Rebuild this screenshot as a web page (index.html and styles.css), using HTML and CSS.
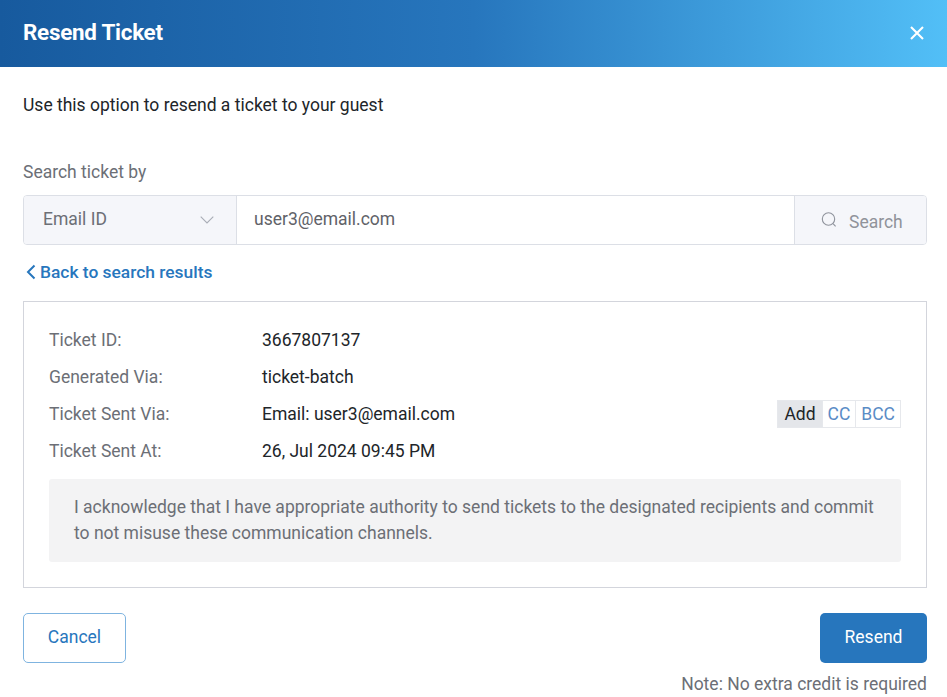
FILE: index.html
```html
<!DOCTYPE html>
<html lang="en">
<head>
<meta charset="utf-8">
<title>Resend Ticket</title>
<link rel="stylesheet" href="styles.css">
</head>
<body>
<div class="modal">
  <header class="head">
    <h1 class="title">Resend Ticket</h1>
    <svg class="close" viewBox="0 0 14 14" width="14" height="14"><path d="M1 1l12 12M13 1L1 13" stroke="#fff" stroke-width="2.1" fill="none"/></svg>
  </header>
  <main class="body">
    <p class="intro">Use this option to resend a ticket to your guest</p>
    <div class="label">Search ticket by</div>
    <div class="search">
      <div class="select">
        <span>Email ID</span>
        <svg viewBox="0 0 14 8" width="14" height="8"><path d="M.7.7L7 7l6.3-6.3" stroke="#a9adb6" stroke-width="1.1" fill="none"/></svg>
      </div>
      <div class="input">user3@email.com</div>
      <div class="go">
        <svg viewBox="0 0 16 16" width="16" height="16"><circle cx="7.5" cy="7" r="6.2" stroke="#8f939c" stroke-width="1.1" fill="none"/><path d="M12 11.6l2.6 2.8" stroke="#8f939c" stroke-width="1.1" fill="none"/></svg>
        <span class="go-text">Search</span>
      </div>
    </div>
    <a class="back">
      <svg viewBox="0 0 10 16" width="10" height="16"><path d="M8.5 1.5L2 8l6.5 6.5" stroke="#2776bd" stroke-width="2" fill="none"/></svg>
      <span>Back to search results</span>
    </a>
    <section class="card">
      <div class="row"><span class="key">Ticket ID:</span><span class="val">3667807137</span></div>
      <div class="row"><span class="key">Generated Via:</span><span class="val">ticket-batch</span></div>
      <div class="row">
        <span class="key">Ticket Sent Via:</span><span class="val">Email: user3@email.com</span>
        <div class="addons"><span class="add">Add</span><span class="opt">CC</span><span class="opt">BCC</span></div>
      </div>
      <div class="row"><span class="key">Ticket Sent At:</span><span class="val">26, Jul 2024 09:45 PM</span></div>
      <div class="notice">I acknowledge that I have appropriate authority to send tickets to the designated recipients and commit to not misuse these communication channels.</div>
    </section>
    <div class="actions">
      <button class="btn cancel">Cancel</button>
      <button class="btn resend">Resend</button>
    </div>
    <div class="note">Note: No extra credit is required</div>
  </main>
</div>
</body>
</html>
```

FILE: styles.css
```css
* { box-sizing: border-box; }
html, body { margin: 0; padding: 0; background: #fff; }
body { font-family: Roboto, "Liberation Sans", sans-serif; font-size: 17.5px; color: #212529; overflow: hidden; height: 697px; }
.modal { width: 947px; }
.head {
  height: 67px;
  padding: 0 23px 0 23px;
  display: flex;
  align-items: center;
  justify-content: space-between;
  background: linear-gradient(90deg, #175a9e 0%, #2776bd 50%, #52bff7 100%);
}
.title { margin: 0 0 4px; font-size: 22.4px; font-weight: 700; line-height: 28px; color: #fff; letter-spacing: -0.25px; }
.close { display: block; margin-bottom: 2px; }
.body { padding: 0 20px 0 23px; }
.intro { margin: 0; padding-top: 27px; line-height: 22px; color: #212529; }
.label { margin-top: 45px; line-height: 22px; color: #6c6f76; }
.search {
  margin-top: 12px;
  height: 50px;
  display: flex;
  border: 1px solid #dcdfe6;
  border-radius: 4px;
  overflow: hidden;
}
.select {
  width: 213px;
  padding: 0 22px 2px 19px;
  display: flex;
  align-items: center;
  justify-content: space-between;
  background: #f5f6fa;
  border-right: 1px solid #dcdfe6;
  color: #6c6f76;
}
.select svg { margin-top: 2px; }
.input { flex: 1; display: flex; align-items: center; padding: 0 0 2px 17px; color: #5f6268; }
.go {
  width: 132px;
  padding-left: 26px;
  display: flex;
  align-items: center;
  gap: 12px;
  background: #f5f6fa;
  border-left: 1px solid #dcdfe6;
  color: #90939a;
}
.go-text { padding-top: 3px; }
.back { margin-top: 17px; display: flex; align-items: center; gap: 4px; height: 20px; padding-left: 3px; color: #2776bd; font-weight: 500; font-size: 17.4px; }
.card {
  margin-top: 19px;
  height: 287px;
  border: 1px solid #d3d5dc;
  padding: 20px 25px 0;
}
.row { display: flex; align-items: center; height: 36.8px; }
.key { width: 213px; color: #6c6f76; }
.val { color: #212529; }
.addons { margin-left: auto; display: flex; height: 28px; }
.addons span { display: flex; align-items: center; padding: 0 5px; border: 1px solid #e6e8ec; margin-left: -1px; }
.addons .add { background: #e4e6ea; color: #212529; padding: 0 6px; }
.opt { color: #5a8cc6; background: #fff; }
.notice {
  margin-top: 9.8px;
  height: 83px;
  padding: 15px 25px;
  background: #f3f3f4;
  border-radius: 3px;
  line-height: 26px;
  color: #6c6f76;
}
.actions { margin-top: 25px; display: flex; justify-content: space-between; }
.btn { height: 50px; border-radius: 5px; font-family: inherit; font-size: 17.5px; padding: 0 0 2px; }
.cancel { width: 103px; background: #fff; border: 1px solid #7fb4e0; color: #2776bd; }
.resend { width: 107px; background: #2776bd; border: 0; color: #fff; }
.note { margin-top: 10px; text-align: right; line-height: 22px; color: #6c6f76; }
```
